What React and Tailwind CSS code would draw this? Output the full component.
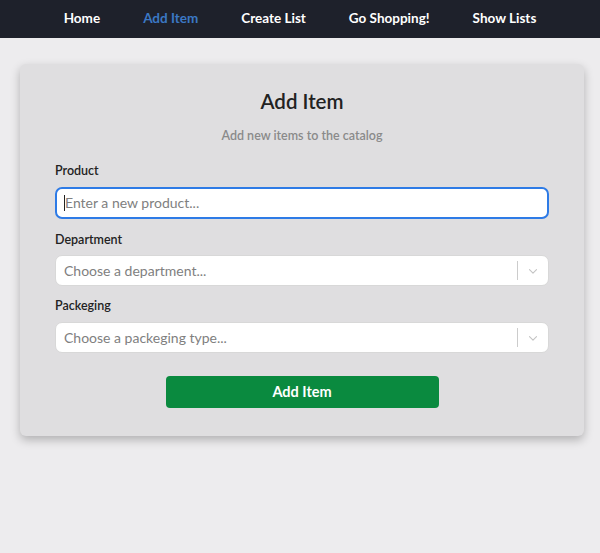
import React from "react";

function Chevron() {
  return (
    <svg width="14" height="14" viewBox="0 0 20 20" className="text-[#c4c4c4]">
      <path d="M5 8l5 5 5-5" fill="none" stroke="currentColor" strokeWidth="1.6" strokeLinecap="round" strokeLinejoin="round" />
    </svg>
  );
}

function Select({ placeholder }) {
  return (
    <div className="flex items-center h-[31px] bg-white rounded-[7px] border border-[#d8d8d8]">
      <span className="flex-1 pl-[8px] text-[14px] text-[#808080]">{placeholder}</span>
      <span className="w-px h-[19px] bg-[#cccccc]"></span>
      <span className="w-[30px] flex items-center justify-center">
        <Chevron />
      </span>
    </div>
  );
}

export default function App() {
  return (
    <div className="min-h-[553px] bg-[#edecee] font-['Lato',sans-serif]">
      <nav className="h-[38px] bg-[#1e212b] flex items-center justify-center gap-[43px] pb-[1px] text-[13.5px] font-bold text-white">
        <span>Home</span>
        <span className="text-[#3b78c4]">Add Item</span>
        <span>Create List</span>
        <span>Go Shopping!</span>
        <span>Show Lists</span>
      </nav>
      <div className="px-[20px] pt-[26px] pr-[16px]">
        <div className="bg-[#dfdee0] rounded-[6px] shadow-[0_4px_10px_rgba(0,0,0,0.25)] px-[35px] pt-[25px] pb-[28px]">
          <h1 className="text-center text-[20.5px] font-semibold text-[#222] leading-[24px]">Add Item</h1>
          <p className="text-center text-[12.5px] font-semibold text-[#8a8a8a] mt-[14px]">Add new items to the catalog</p>
          <label className="block text-[12.5px] font-semibold text-[#222] mt-[16px]">Product</label>
          <div className="mt-[6px] h-[32px] bg-white rounded-[7px] border-2 border-[#2e7be6] flex items-center pl-[7px]">
            <span className="w-px h-[16px] bg-[#222]"></span>
            <span className="text-[14px] text-[#808080]">Enter a new product...</span>
          </div>
          <label className="block text-[12.5px] font-semibold text-[#222] mt-[12px]">Department</label>
          <div className="mt-[6px]"><Select placeholder="Choose a department..." /></div>
          <label className="block text-[12.5px] font-semibold text-[#222] mt-[11px]">Packeging</label>
          <div className="mt-[6px]"><Select placeholder="Choose a packeging type..." /></div>
          <div className="flex justify-center mt-[23px]">
            <button className="w-[273px] h-[32px] rounded-[4px] bg-[#0a8a3f] text-white text-[14.5px] font-bold">Add Item</button>
          </div>
        </div>
      </div>
    </div>
  );
}
